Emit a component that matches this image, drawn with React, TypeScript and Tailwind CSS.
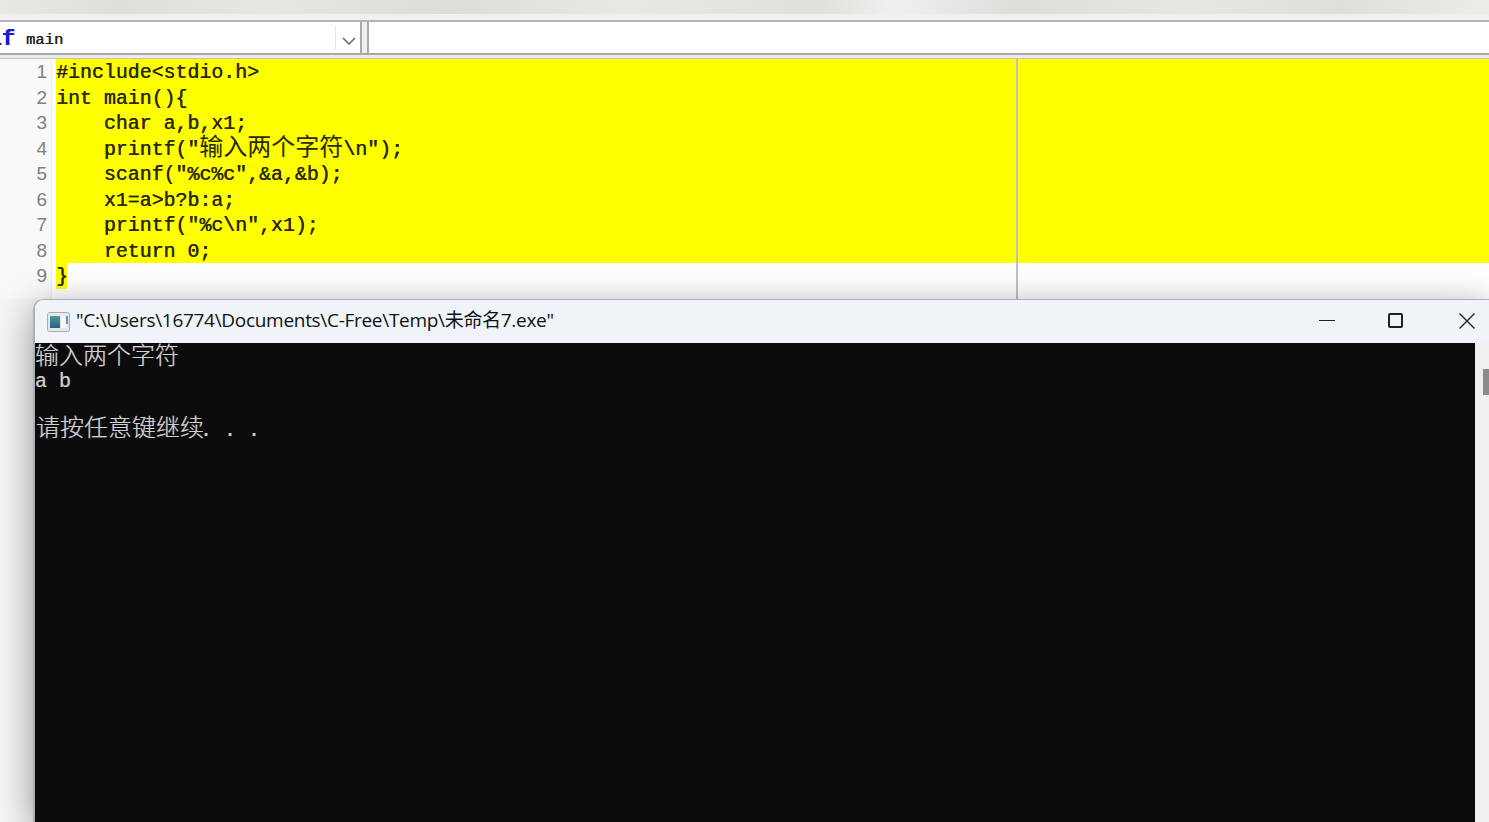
import React from 'react';

const codeLines = [
  '#include<stdio.h>',
  'int main(){',
  '    char a,b,x1;',
  '    printf("输入两个字符\\n");',
  '    scanf("%c%c",&a,&b);',
  '    x1=a>b?b:a;',
  '    printf("%c\\n",x1);',
  '    return 0;',
];

// CJK cells are two columns wide in the editor, so 24px against a 12px mono advance
const CodeText = ({ text }: { text: string }) => (
  <>
    {text.split(/([\u4e00-\u9fff]+)/).map((part, i) =>
      /[\u4e00-\u9fff]/.test(part) ? (
        <span key={i} className="text-[24px] leading-[0] font-['Noto_Sans_CJK_SC',sans-serif] [text-shadow:none]">{part}</span>
      ) : (
        <span key={i}>{part}</span>
      )
    )}
  </>
);

const ConsoleIcon = () => (
  <svg width="23" height="20" viewBox="0 0 23 20">
    <defs>
      <linearGradient id="consoleFill" x1="0" y1="0" x2="0" y2="1">
        <stop offset="0" stopColor="#4f9a9a" />
        <stop offset="1" stopColor="#2a5f8a" />
      </linearGradient>
    </defs>
    <rect x="0.5" y="0.5" width="22" height="19" rx="2" fill="#e4e8ec" stroke="#a8acb0" />
    <rect x="3" y="4" width="10" height="12" fill="url(#consoleFill)" />
    <rect x="14" y="4" width="5" height="12" fill="#f4f6f8" />
    <rect x="19" y="4" width="2" height="8" fill="#5f9a9a" />
  </svg>
);

const ConsoleWindow = () => (
  <div className="absolute left-[33px] top-[299px] bottom-0 right-0 flex flex-col rounded-tl-[10px] overflow-hidden border-t border-l-2 border-[#acb0b4] shadow-[0_8px_36px_rgba(0,0,0,0.4)]">
    <div className="flex h-[43px] shrink-0 items-center bg-[#eff4f9] pl-[12px]">
      <ConsoleIcon />
      <span className="ml-[6px] mb-[2px] text-[19px] leading-none text-[#111] font-['Open_Sans','Noto_Sans_CJK_SC',sans-serif] tracking-[-0.3px]">
        "C:\Users\16774\Documents\C-Free\Temp\未命名7.exe"
      </span>
      <div className="ml-auto mb-[2px] flex items-center">
        <div className="h-px w-[16px] bg-[#222] mr-[53px]" />
        <div className="h-[15px] w-[15px] rounded-[2px] border-2 border-[#222] mr-[56px]" />
        <svg width="16" height="16" viewBox="0 0 16 16" className="mr-[14px] text-[#222]">
          <path d="M0.5 0.5L15.5 15.5M15.5 0.5L0.5 15.5" stroke="currentColor" strokeWidth="1.4" />
        </svg>
      </div>
    </div>
    <div className="flex flex-1 min-h-0">
      <div className="flex-1 bg-[#0c0c0c] text-[#d0d0d0] font-['Noto_Sans_CJK_SC',sans-serif] font-light [text-shadow:0.5px_0_0_rgba(90,170,230,0.45),-0.5px_0_0_rgba(230,150,90,0.45)]">
        <div className="h-[25px] text-[24px] leading-[21px]">输入两个字符</div>
        <div className="h-[24px] text-[20px] leading-[27px] font-['Liberation_Mono',monospace] whitespace-pre">a b</div>
        <div className="h-[23px]" />
        <div className="h-[25px] pl-[1px] text-[24px] leading-[21px] whitespace-pre">
          请按任意键继续<span className="-ml-[4px] text-[20px] font-['Liberation_Mono',monospace]">. . .</span>
        </div>
      </div>
      <div className="w-[14px] bg-[#f0f0f0] pt-[26px] pl-[8px]">
        <div className="h-[26px] w-[6px] bg-[#8b8b8b]" />
      </div>
    </div>
  </div>
);

export default function App() {
  return (
    <div className="relative h-[822px] w-[1489px] overflow-hidden bg-[#f5f5f5]">
      {/* toolbar strip */}
      <div className="h-[14px] bg-[linear-gradient(90deg,#e8e8e4,#dedfda_8%,#e6e6e2_18%,#dcddd8_30%,#e8e8e4_42%,#dfe0db_55%,#f0f0ee_60%,#dddeda_68%,#e6e6e2_80%,#dedfda_90%,#ecece9)]" />
      <div className="h-[6px] bg-[#f0f0ee]" />
      <div className="h-[2px] bg-[#b4b4b4]" />

      {/* combo row */}
      <div className="flex h-[31px] bg-white">
        <div className="flex w-[362px] shrink-0 items-center border-r-2 border-[#a8a8a8] pt-[7px]">
          <span className="flex w-[15px] justify-end overflow-hidden whitespace-pre text-[22px] font-bold leading-none font-['Liberation_Mono',monospace] text-[#1a1ad0] -mt-[3px] [text-shadow:0.5px_0_0_#1a1ad0]">
            <span className="text-[#222]">l</span>f
          </span>
          <span className="ml-[11px] flex-1 text-[15.5px] leading-none text-[#222] font-['Liberation_Mono',monospace] [text-shadow:0.3px_0_0_#222]">main</span>
          <div className="-mt-[7px] flex h-full w-[25px] items-center justify-center border-l border-[#e4e4e4] pl-[2px] pt-[7px]">
            <svg width="14" height="8" viewBox="0 0 14 8">
              <path d="M1 1L7 7L13 1" fill="none" stroke="#666" strokeWidth="1.5" />
            </svg>
          </div>
        </div>
        <div className="w-[5px] shrink-0 bg-[#efefef]" />
        <div className="flex-1 border-l-2 border-[#a8a8a8]" />
      </div>
      <div className="h-[2px] bg-[#a8a8a8]" />
      <div className="h-[3px] bg-[#ececec]" />
      <div className="h-px bg-[#c4c4c4]" />

      {/* editor */}
      <div className="flex h-[240px] bg-white">
        <div className="w-[52px] shrink-0 border-r border-[#efefef] bg-[#f9f9f9] pr-[4px] text-right text-[19px] leading-[25.5px] text-[#808080] font-['Liberation_Sans',sans-serif]">
          {[1, 2, 3, 4, 5, 6, 7, 8, 9].map((n) => (
            <div key={n} className="h-[25.5px]">{n}</div>
          ))}
        </div>
        <div className="relative flex-1 pl-[4px] font-['Liberation_Mono','Noto_Sans_CJK_SC',monospace] text-[19.9px] leading-[25.5px] text-[#2a2a00] whitespace-pre [text-shadow:0.4px_0_0_#2a2a00]">
          {codeLines.map((line) => (
            <div key={line} className="h-[25.5px] pt-[1px] bg-[#ffff00]">
              <CodeText text={line} />
            </div>
          ))}
          <div className="h-[26px] w-[11px] pt-[1px] bg-[#ffff00]">{'}'}</div>
          <div className="absolute top-0 bottom-0 left-[964px] w-[2px] bg-[#c0c0c0]" />
        </div>
      </div>

      <ConsoleWindow />
    </div>
  );
}
